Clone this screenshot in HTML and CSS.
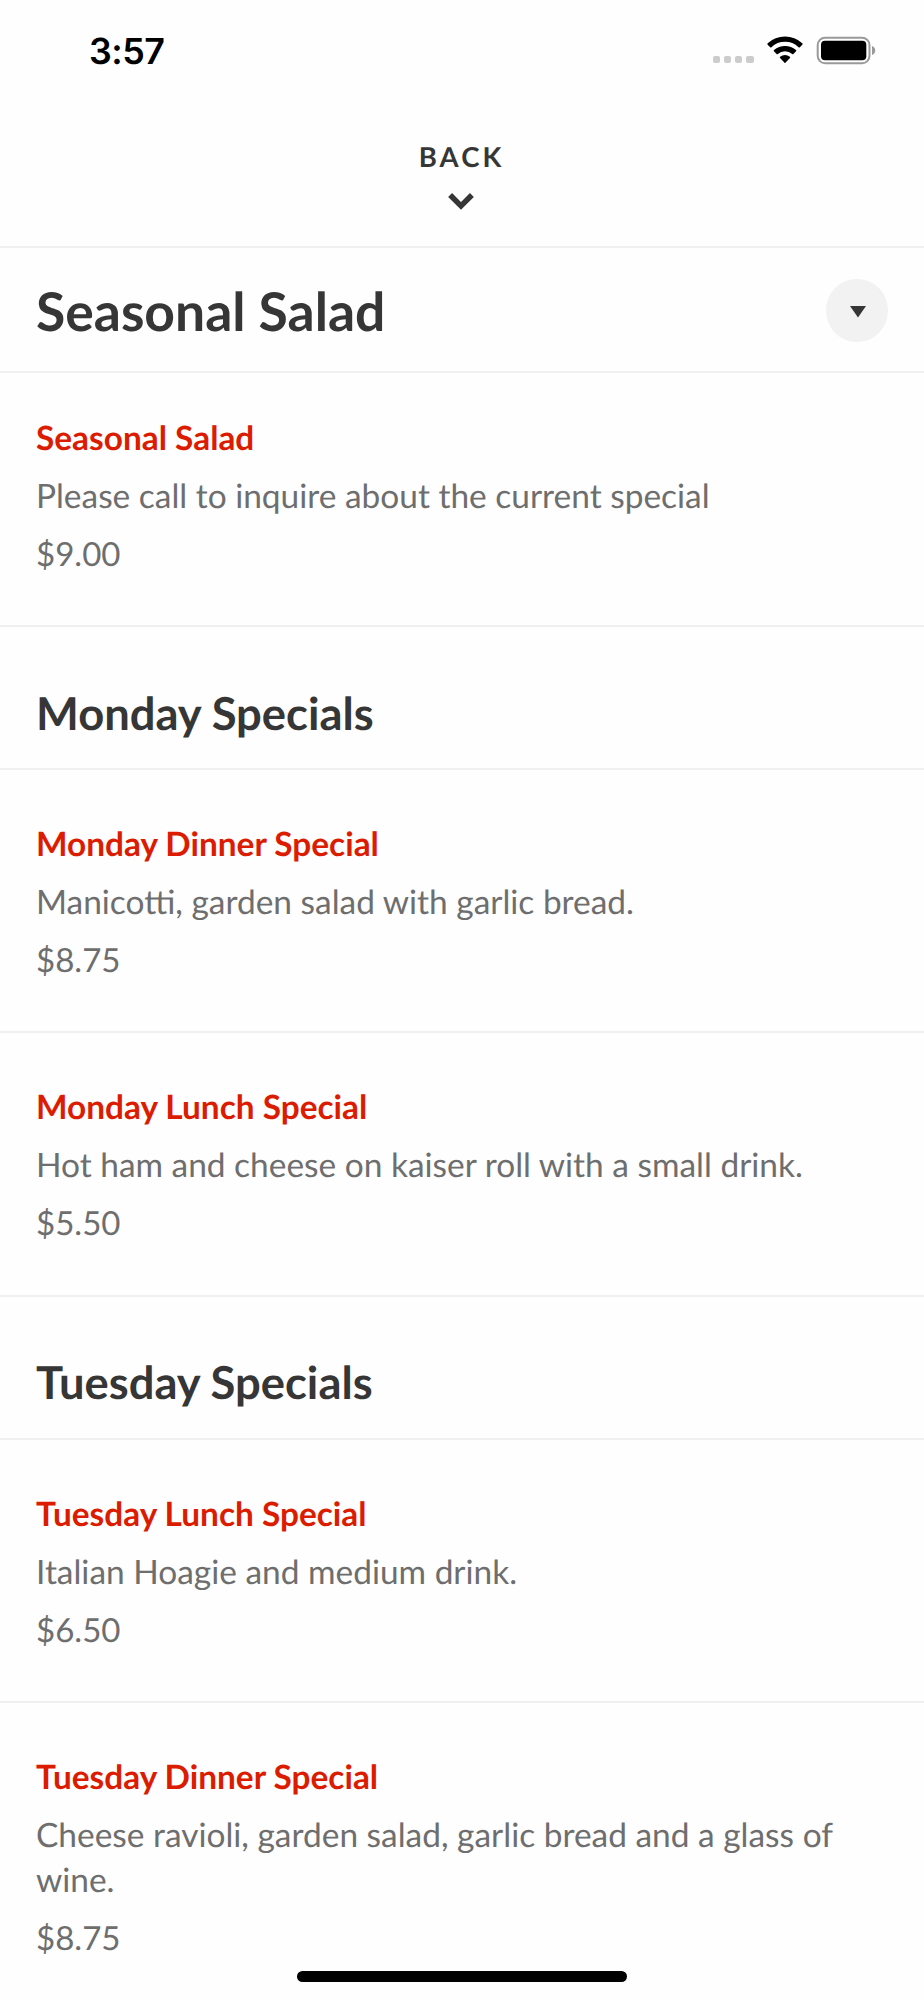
FILE: index.html
```html
<!DOCTYPE html>
<html lang="en">
<head>
<meta charset="utf-8">
<title>Seasonal Salad</title>
<link rel="stylesheet" href="styles.css">
</head>
<body>
<div class="screen">
  <header class="status">
    <span class="time">3:57</span>
    <div class="indicators">
      <span class="dots"><i></i><i></i><i></i><i></i></span>
      <svg class="wifi" width="36" height="28" viewBox="0 0 36 28"><g stroke="#000" stroke-width="1.800" stroke-linejoin="round"><path d="M18 1.500c6.400 0 12.300 2.500 16.700 6.500l-2.500 2.500a20.800 20.800 0 0 0-28.400 0L1.300 8A24.800 24.800 0 0 1 18 1.500Z"/><path d="M18 10.800c4 0 7.600 1.500 10.400 3.900l-2.600 2.600a11.800 11.800 0 0 0-15.600 0l-2.600-2.600c2.800-2.400 6.400-3.900 10.400-3.900Z"/><path d="M18 20c1.600 0 3.100.5 4.300 1.400L18 26l-4.300-4.600c1.200-.9 2.700-1.400 4.300-1.400Z"/></g></svg>
      <svg class="battery" width="60" height="29" viewBox="0 0 60 29"><rect x="1.700" y="1.700" width="51.800" height="25.600" rx="7.500" fill="none" stroke="#999" stroke-width="2"/><rect x="5" y="4.800" width="45.300" height="19.400" rx="4"/><path d="M56 10c4.300 1.400 4.300 7.600 0 9Z" fill="#999"/></svg>
    </div>
  </header>
  <div class="back"><span>BACK</span><svg width="26" height="17" viewBox="0 0 26 17"><path d="M2.100 1.950 13 12.850 23.900 1.950" fill="none" stroke="#363636" stroke-width="5.500"/></svg></div>
  <div class="title"><h1>Seasonal Salad</h1><button class="toggle" aria-label="Sections"><svg width="16" height="12" viewBox="0 0 16 12"><path d="M0 0h16L8 11.500Z" fill="#363636"/></svg></button></div>
  <section class="item first"><h3>Seasonal Salad</h3><p>Please call to inquire about the current special</p><p class="price">$9.00</p></section>
  <h2>Monday Specials</h2>
  <section class="item"><h3>Monday Dinner Special</h3><p>Manicotti, garden salad with garlic bread.</p><p class="price">$8.75</p></section>
  <section class="item"><h3>Monday Lunch Special</h3><p>Hot ham and cheese on kaiser roll with a small drink.</p><p class="price">$5.50</p></section>
  <h2>Tuesday Specials</h2>
  <section class="item"><h3>Tuesday Lunch Special</h3><p>Italian Hoagie and medium drink.</p><p class="price">$6.50</p></section>
  <section class="item"><h3>Tuesday Dinner Special</h3><p>Cheese ravioli, garden salad, garlic bread and a glass of wine.</p><p class="price">$8.75</p></section>
  <div class="home"></div>
</div>
</body>
</html>
```
FILE: styles.css
```css
* { box-sizing: border-box; }
body, h1, h2, h3, p { margin: 0; }
body { background: #fefefe; font-family: Lato, sans-serif; color: #363636; text-rendering: geometricPrecision; }
.screen { position: relative; height: 2000px; overflow: hidden; }
.status { height: 103px; padding: 0 48px 0 89px; display: flex; justify-content: space-between; }
.time { padding-top: 29px; font: 600 35.900px/44px Inter, sans-serif; color: #000; letter-spacing: -.5px; }
.indicators { display: flex; padding-top: 36px; }
.dots { display: flex; gap: 3.700px; margin: 20px 13.500px 0 0; height: 7.400px; }
.dots i { width: 7.400px; height: 7.400px; border-radius: 2px; background: #ccc; }
.wifi { margin-right: 13px; }
.back { height: 145px; border-bottom: 2px solid #f0f0f0; padding-right: 3px; display: flex; flex-direction: column; align-items: center; }
.back span { padding-top: 37px; font-size: 27.500px; line-height: 34px; font-weight: 700; letter-spacing: 3.100px; margin-right: -2px; }
.back svg { margin-top: 19px; }
.title { height: 125px; border-bottom: 2px solid #f0f0f0; padding: 2px 36px 0; display: flex; justify-content: space-between; align-items: center; }
h1 { font-size: 53.450px; line-height: 64px; font-weight: 700; }
.toggle { width: 62.500px; height: 62.500px; border: 0; padding: 2px 0 0 2px; border-radius: 50%; background: #f2f2f2; display: flex; align-items: center; justify-content: center; }
.item { padding: 52px 36px 48.330px; border-bottom: 2px solid #f0f0f0; }
.item.first { padding-top: 43px; padding-bottom: 48px; }
.item h3 { font-size: 33.400px; line-height: 45px; font-weight: 700; color: #dc1c00; }
.item p { margin-top: 13px; font-size: 33.450px; line-height: 45px; color: #6e6e6e; }
.item .price { font-size: 33.100px; }
h2 { height: 143px; border-bottom: 2px solid #f0f0f0; padding: 57.500px 36px 0; font-size: 45.350px; line-height: 56px; font-weight: 700; }
.home { position: absolute; left: 297px; bottom: 18px; width: 330px; height: 11px; border-radius: 6px; background: #000; }
```
